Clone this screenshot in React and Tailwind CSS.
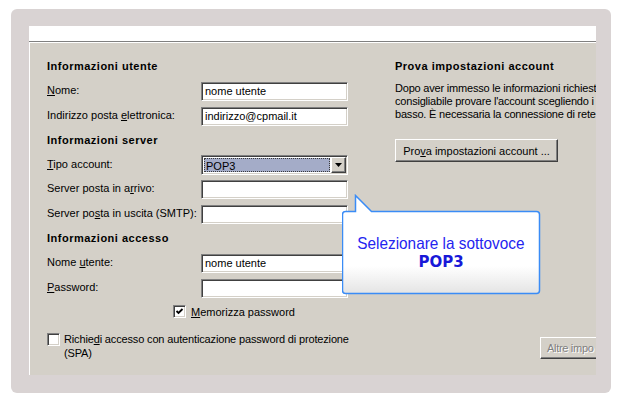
import React from 'react';

const FONT = { fontFamily: '"Liberation Sans", Arial, sans-serif' };

const sunken =
  'border border-[#808080] border-b-white border-r-white shadow-[inset_1px_1px_0_#404040,inset_-1px_-1px_0_#d4d0c8] bg-white';
const raised =
  'border border-white border-b-[#404040] border-r-[#404040] shadow-[inset_-1px_-1px_0_#808080]';

function Field({ label, value, top, h = 'h-[19px]' }) {
  return (
    <div className={`flex items-start justify-between ${top}`}>
      <span className="leading-[14px] pt-[1px]">{label}</span>
      <div className={`w-[147px] ${h} ${sunken} pl-[3px] leading-[17px] text-[11px] text-black`}>{value}</div>
    </div>
  );
}

function Heading({ children, top = '' }) {
  return <div className={`h-[14px] leading-[14px] font-bold tracking-[0.5px] ${top}`}>{children}</div>;
}

function Check({ checked }) {
  return (
    <div className={`w-[13px] h-[13px] shrink-0 ${sunken} flex items-center justify-center`}>
      {checked && (
        <svg width="9" height="9" viewBox="0 0 9 9">
          <path d="M1.5 4 L3.5 6 L7.5 2" fill="none" stroke="#000" strokeWidth="1.8" />
        </svg>
      )}
    </div>
  );
}

export default function App() {
  return (
    <div className="w-[622px] h-[403px] bg-white pt-[9px] pl-[11px]" style={FONT}>
      <div className="w-[600px] h-[384px] rounded-[6px] bg-[#d9d3d3] pt-[17px] pl-[18px]">
        <div className="relative w-[567px] h-[349px] overflow-hidden bg-[#d4d0c8] text-[11px] text-black">
          <div className="h-[15px] bg-white" />
          <div className="h-px bg-[#808080]" />
          <div className="flex h-[333px] border-t border-l border-white pt-[16px] pl-[17px]">
            {/* left column */}
            <div className="w-[301px] shrink-0">
              <Heading>Informazioni utente</Heading>
              <Field top="mt-[9px]" label={<><u>N</u>ome:</>} value="nome utente" />
              <Field top="mt-[6px]" label={<>Indirizzo posta <u>e</u>lettronica:</>} value="indirizzo@cpmail.it" />
              <Heading top="mt-[7px]">Informazioni server</Heading>

              <div className="flex items-start justify-between mt-[8px]">
                <span className="leading-[14px] pt-[2px]"><u>T</u>ipo account:</span>
                <div className={`w-[147px] h-[20px] ${sunken} flex p-px`}>
                  <div className="flex-1 bg-[#a4acc8] border border-dotted border-[#3a3a3a] leading-[14px] pl-px my-px mr-px ml-px">POP3</div>
                  <div className={`w-[15px] h-[16px] bg-[#d4d0c8] ${raised} flex items-center justify-center`}>
                    <svg width="7" height="4" viewBox="0 0 7 4">
                      <path d="M0 0 H7 L3.5 4 Z" fill="#000" />
                    </svg>
                  </div>
                </div>
              </div>

              <Field top="mt-[5px]" label={<>Server posta in a<u>r</u>rivo:</>} value="" />
              <Field top="mt-[6px]" label={<>Server po<u>s</u>ta in uscita (SMTP):</>} value="" />
              <Heading top="mt-[7px]">Informazioni accesso</Heading>
              <Field top="mt-[9px]" label={<>Nome <u>u</u>tente:</>} value="nome utente" />
              <Field top="mt-[6px]" label={<><u>P</u>assword:</>} value="" />

              <div className="flex items-center gap-[5px] mt-[7px] pl-[126px] h-[13px]">
                <Check checked />
                <span className="leading-[14px]"><u>M</u>emorizza password</span>
              </div>

              <div className="flex items-start gap-[4px] mt-[14px]">
                <div className="mt-px"><Check /></div>
                <span className="leading-[14px] whitespace-nowrap tracking-[-0.15px]">
                  Richie<u>d</u>i accesso con autenticazione password di protezione
                  <br />
                  (SPA)
                </span>
              </div>
            </div>

            {/* right column */}
            <div className="ml-[47px] shrink-0 w-[201px]">
              <Heading>Prova impostazioni account</Heading>
              <div className="mt-[9px] leading-[13px] whitespace-nowrap tracking-[-0.2px]">
                <div>Dopo aver immesso le informazioni richiest</div>
                <div>consigliabile provare l'account scegliendo i</div>
                <div>basso. È necessaria la connessione di rete</div>
              </div>
              <div className={`mt-[18px] w-[163px] h-[23px] ${raised} flex items-center justify-center leading-[14px]`}>
                Pro<u>v</u>a impostazioni account ...
              </div>
              <div className={`mt-[175px] ml-[145px] w-[70px] h-[22px] ${raised} flex items-center pl-[6px] leading-[14px] whitespace-nowrap tracking-[-0.3px] text-[#808080] [text-shadow:1px_1px_0_#fff]`}>
                Altre impo
              </div>
            </div>
          </div>

          {/* callout */}
          <svg className="absolute left-[313px] top-[168px]" width="199" height="101" viewBox="0 0 199 101">
            <defs>
              <linearGradient id="bub" x1="0" y1="0" x2="0" y2="1">
                <stop offset="0" stopColor="#ffffff" />
                <stop offset="0.72" stopColor="#ffffff" />
                <stop offset="1" stopColor="#e4e4e4" />
              </linearGradient>
            </defs>
            <path
              d="M3.5 17.5 H13.5 V1.5 L29.5 17.5 H194.5 Q197.5 17.5 197.5 20.5 V96.5 Q197.5 99.5 194.5 99.5 H3.5 Q0.5 99.5 0.5 96.5 V20.5 Q0.5 17.5 3.5 17.5 Z"
              fill="url(#bub)"
              stroke="#3a8cf6"
              strokeWidth="1.5"
            />
          </svg>
          <div className="absolute left-[313px] top-[185px] w-[198px] h-[83px] flex flex-col items-center pt-[23px] text-[#2424f0]">
            <div className="text-[16.5px] leading-[19px] scale-x-[0.93] whitespace-nowrap">Selezionare la sottovoce</div>
            <div className="text-[15px] leading-[19px] font-bold text-[#1818d8]" style={{ fontFamily: '"DejaVu Sans", sans-serif' }}>POP3</div>
          </div>
        </div>
      </div>
    </div>
  );
}
